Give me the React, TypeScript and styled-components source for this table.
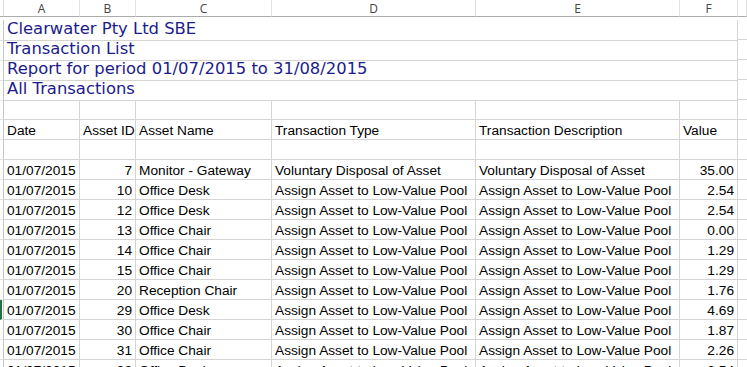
import React from "react";
import styled, { createGlobalStyle } from "styled-components";

const GlobalStyle = createGlobalStyle`
  html, body {
    margin: 0;
    padding: 0;
    background: #fff;
    overflow: hidden;
  }
`;

type Align = "left" | "right" | "center";

const Sheet = styled.div`
  display: grid;
  grid-template-columns: 4px 76px 56px 136px 204px 204px 58px 1fr;
  grid-auto-rows: 20px;
  width: 747px;
  height: 367px;
  overflow: hidden;
  font-family: "Liberation Sans", Arial, sans-serif;
  font-size: 13.7px;
  color: #000;
`;

const ColHead = styled.div`
  height: 17px;
  box-sizing: border-box;
  border-right: 1px solid #e1e1e1;
  border-bottom: 1px solid #ababab;
  display: flex;
  align-items: center;
  justify-content: center;
  font-family: "Open Sans", "DejaVu Sans", sans-serif;
  font-size: 12px;
  color: #444;
`;

const RowStub = styled.div<{ active?: boolean; tall?: boolean }>`
  height: ${(p) => (p.tall ? "21px" : "20px")};
  box-sizing: border-box;
  border-right: 1px solid #c6c6c6;
  border-bottom: 1px solid #e1e1e1;
  border-left: ${(p) => (p.active ? "2px solid #217346" : "none")};
`;

const TitleCell = styled.div`
  grid-column: span 6;
  height: 21px;
  box-sizing: border-box;
  border-right: 1px solid #d4d4d4;
  border-bottom: 1px solid #d4d4d4;
  display: flex;
  align-items: flex-end;
  padding: 0 0 2px 3px;
  font-family: "DejaVu Sans", Verdana, sans-serif;
  font-size: 16.4px;
  color: #1c1c8c;
  white-space: nowrap;
  line-height: 19px;
`;

const Cell = styled.div<{ align?: Align }>`
  box-sizing: border-box;
  border-right: 1px solid #d4d4d4;
  border-bottom: 1px solid #d4d4d4;
  display: flex;
  align-items: flex-end;
  justify-content: ${(p) =>
    p.align === "right" ? "flex-end" : p.align === "center" ? "center" : "flex-start"};
  padding: 0 3px 0 3px;
  white-space: nowrap;
  overflow: hidden;
  line-height: 16px;
`;

const Filler = styled.div`
  box-sizing: border-box;
  border-bottom: 1px solid #d4d4d4;
`;

const titles = [
  "Clearwater Pty Ltd SBE",
  "Transaction List",
  "Report for period 01/07/2015 to 31/08/2015",
  "All Transactions",
];

const pool = "Assign Asset to Low-Value Pool";

const rows = [
  ["01/07/2015", "7", "Monitor - Gateway", "Voluntary Disposal of Asset", "Voluntary Disposal of Asset", "35.00"],
  ["01/07/2015", "10", "Office Desk", pool, pool, "2.54"],
  ["01/07/2015", "12", "Office Desk", pool, pool, "2.54"],
  ["01/07/2015", "13", "Office Chair", pool, pool, "0.00"],
  ["01/07/2015", "14", "Office Chair", pool, pool, "1.29"],
  ["01/07/2015", "15", "Office Chair", pool, pool, "1.29"],
  ["01/07/2015", "20", "Reception Chair", pool, pool, "1.76"],
  ["01/07/2015", "29", "Office Desk", pool, pool, "4.69"],
  ["01/07/2015", "30", "Office Chair", pool, pool, "1.87"],
  ["01/07/2015", "31", "Office Chair", pool, pool, "2.26"],
  ["01/07/2015", "32", "Office Desk", pool, pool, "2.54"],
];

const aligns: Align[] = ["left", "right", "left", "left", "left", "right"];

export default function App() {
  return (
    <>
      <GlobalStyle />
      <Sheet>
        <ColHead />
        {["A", "B", "C", "D", "E", "F"].map((c) => (
          <ColHead key={c}>{c}</ColHead>
        ))}
        <ColHead />

        {titles.map((t) => (
          <React.Fragment key={t}>
            <RowStub tall />
            <TitleCell>{t}</TitleCell>
            <Filler />
          </React.Fragment>
        ))}

        <RowStub />
        {aligns.map((_, i) => (
          <Cell key={i} />
        ))}
        <Filler />

        <RowStub />
        {["Date", "Asset ID", "Asset Name", "Transaction Type", "Transaction Description", "Value"].map((h) => (
          <Cell key={h}>{h}</Cell>
        ))}
        <Filler />

        <RowStub />
        {aligns.map((_, i) => (
          <Cell key={i} />
        ))}
        <Filler />

        {rows.map((r, ri) => (
          <React.Fragment key={ri}>
            <RowStub active={ri === 7} />
            {r.map((v, ci) => (
              <Cell key={ci} align={aligns[ci]}>
                {v}
              </Cell>
            ))}
            <Filler />
          </React.Fragment>
        ))}
      </Sheet>
    </>
  );
}
